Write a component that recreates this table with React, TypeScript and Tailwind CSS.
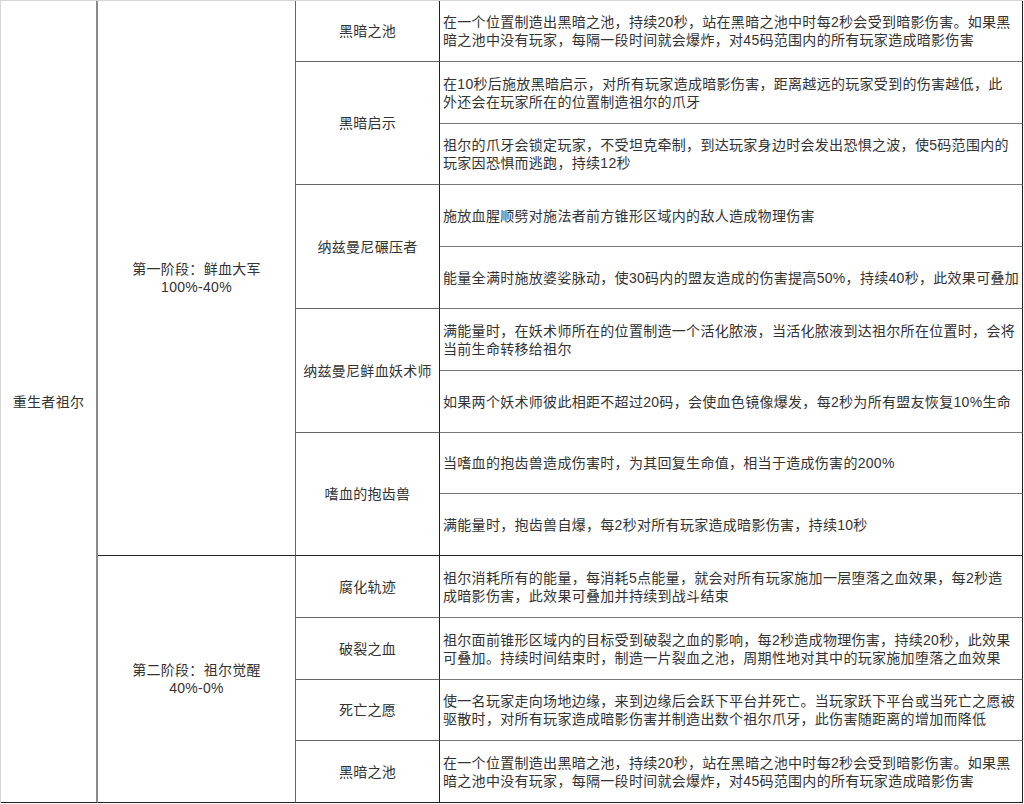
type Skill = { name: string; descs: string[][] };
type Phase = { title: string; range: string; skills: Skill[] };

const darkPool = [
  "在一个位置制造出黑暗之池，持续20秒，站在黑暗之池中时每2秒会受到暗影伤害。如果黑",
  "暗之池中没有玩家，每隔一段时间就会爆炸，对45码范围内的所有玩家造成暗影伤害",
];

const phases: Phase[] = [
  {
    title: "第一阶段：鲜血大军",
    range: "100%-40%",
    skills: [
      { name: "黑暗之池", descs: [darkPool] },
      {
        name: "黑暗启示",
        descs: [
          [
            "在10秒后施放黑暗启示，对所有玩家造成暗影伤害，距离越远的玩家受到的伤害越低，此",
            "外还会在玩家所在的位置制造祖尔的爪牙",
          ],
          [
            "祖尔的爪牙会锁定玩家，不受坦克牵制，到达玩家身边时会发出恐惧之波，使5码范围内的",
            "玩家因恐惧而逃跑，持续12秒",
          ],
        ],
      },
      {
        name: "纳兹曼尼碾压者",
        descs: [
          ["施放血腥顺劈对施法者前方锥形区域内的敌人造成物理伤害"],
          ["能量全满时施放婆娑脉动，使30码内的盟友造成的伤害提高50%，持续40秒，此效果可叠加"],
        ],
      },
      {
        name: "纳兹曼尼鲜血妖术师",
        descs: [
          [
            "满能量时，在妖术师所在的位置制造一个活化脓液，当活化脓液到达祖尔所在位置时，会将",
            "当前生命转移给祖尔",
          ],
          ["如果两个妖术师彼此相距不超过20码，会使血色镜像爆发，每2秒为所有盟友恢复10%生命"],
        ],
      },
      {
        name: "嗜血的抱齿兽",
        descs: [
          ["当嗜血的抱齿兽造成伤害时，为其回复生命值，相当于造成伤害的200%"],
          ["满能量时，抱齿兽自爆，每2秒对所有玩家造成暗影伤害，持续10秒"],
        ],
      },
    ],
  },
  {
    title: "第二阶段：祖尔觉醒",
    range: "40%-0%",
    skills: [
      {
        name: "腐化轨迹",
        descs: [
          [
            "祖尔消耗所有的能量，每消耗5点能量，就会对所有玩家施加一层堕落之血效果，每2秒造",
            "成暗影伤害，此效果可叠加并持续到战斗结束",
          ],
        ],
      },
      {
        name: "破裂之血",
        descs: [
          [
            "祖尔面前锥形区域内的目标受到破裂之血的影响，每2秒造成物理伤害，持续20秒，此效果",
            "可叠加。持续时间结束时，制造一片裂血之池，周期性地对其中的玩家施加堕落之血效果",
          ],
        ],
      },
      {
        name: "死亡之愿",
        descs: [
          [
            "使一名玩家走向场地边缘，来到边缘后会跃下平台并死亡。当玩家跃下平台或当死亡之愿被",
            "驱散时，对所有玩家造成暗影伤害并制造出数个祖尔爪牙，此伤害随距离的增加而降低",
          ],
        ],
      },
      { name: "黑暗之池", descs: [darkPool] },
    ],
  },
];

const spanClass: Record<number, string> = {
  1: "row-span-1",
  2: "row-span-2",
  4: "row-span-4",
  9: "row-span-9",
};

export default function App() {
  return (
    <div
      className="bg-white text-[#333] text-[14px] leading-[18px] tracking-[0.3px]"
      style={{ fontFamily: '"Liberation Sans", "Noto Sans CJK SC", sans-serif' }}
    >
      <div className="w-[1023px] border-t border-l border-[#d4d4d4] grid grid-cols-[97px_198px_144px_583px] grid-rows-[61px_62px_61px_62px_62px_62px_62px_61px_62px_62px_62px_61px_62px]">
        <div className="row-[span_13/span_13] border-r-2 border-b border-r-[#8a8a8a] border-b-[#222] flex items-center justify-center">
          重生者祖尔
        </div>
        {phases.map((phase, pi) => {
          const rows = phase.skills.reduce((n, s) => n + s.descs.length, 0);
          return [
            <div
              key={`p${pi}`}
              className={`${spanClass[rows]} border-r border-b border-r-[#666] border-b-[#222] flex flex-col items-center justify-center text-center`}
            >
              <div>{phase.title}</div>
              <div>{phase.range}</div>
            </div>,
            ...phase.skills.flatMap((skill, si) => {
              const last = si === phase.skills.length - 1;
              return [
                <div
                  key={`s${pi}-${si}`}
                  className={`${spanClass[skill.descs.length]} border-r border-b border-r-[#222] ${last ? "border-b-[#222]" : "border-b-[#666]"} flex items-center justify-center text-center`}
                >
                  {skill.name}
                </div>,
                ...skill.descs.map((lines, di) => (
                  <div
                    key={`d${pi}-${si}-${di}`}
                    className={`border-r border-b border-r-[#222] ${last && di === skill.descs.length - 1 ? "border-b-[#222]" : "border-b-[#777]"} flex flex-col justify-center pl-[3px] whitespace-nowrap overflow-hidden`}
                  >
                    {lines.map((l, li) => (
                      <div key={li}>{l}</div>
                    ))}
                  </div>
                )),
              ];
            }),
          ];
        })}
      </div>
    </div>
  );
}
